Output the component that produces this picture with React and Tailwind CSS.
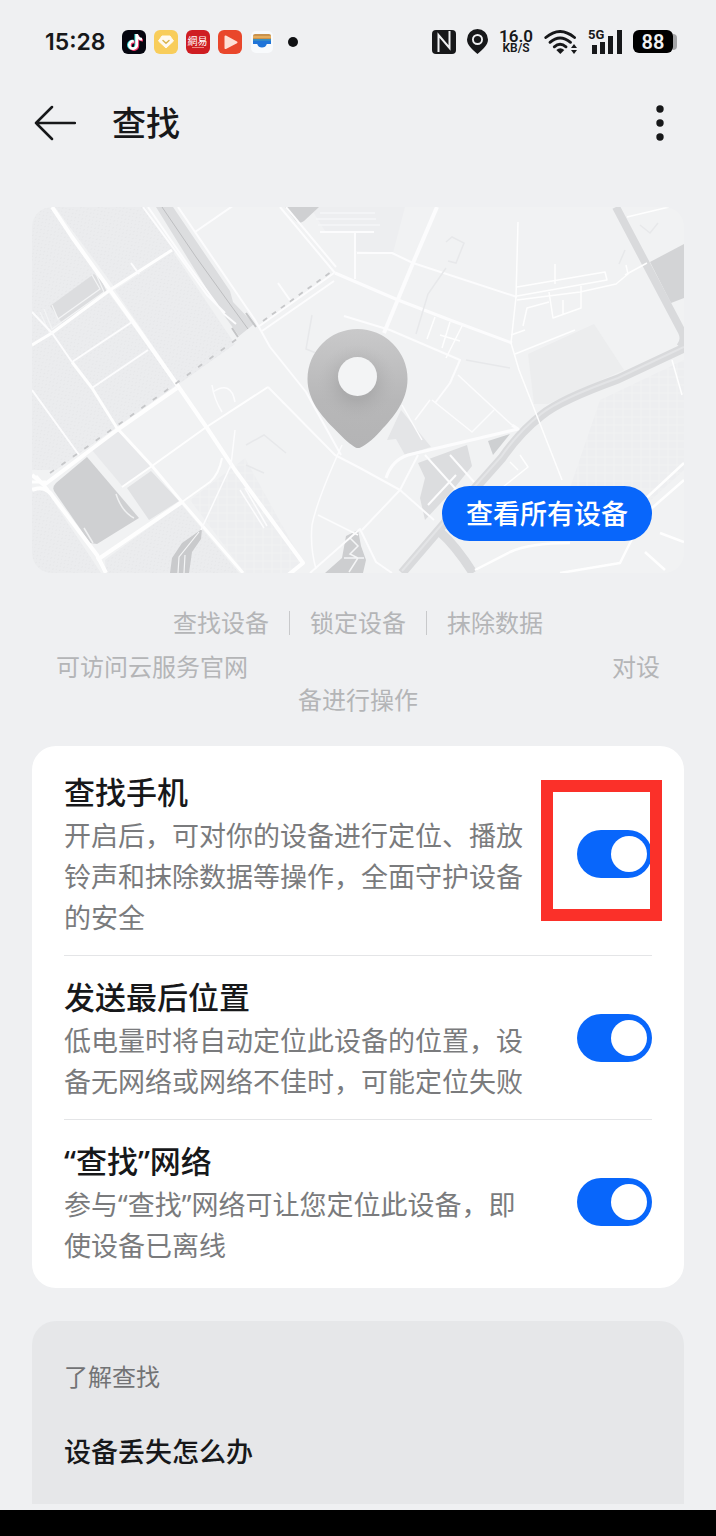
import React from "react";
import { FaTiktok } from "react-icons/fa6";

function StatusBar() {
  return (
    <div className="flex h-[83px] items-center justify-between pl-[45px] pr-[39px] font-['Inter','Noto_Sans_CJK_SC',sans-serif] text-[#17181a]">
      <div className="flex items-center gap-2">
        <span className="mr-2 text-[23px] font-semibold leading-6">15:28</span>
        <span className="relative grid size-6 place-items-center rounded-[6px] bg-[#050610]">
          <FaTiktok className="absolute left-[4px] top-[4px] size-4 text-[#35dbe0]" />
          <FaTiktok className="absolute left-[6px] top-[5px] size-4 text-[#f0386b]" />
          <FaTiktok className="absolute left-[5px] top-[4px] size-4 text-white" />
        </span>
        <svg className="size-6" viewBox="0 0 24 24">
          <rect width="24" height="24" rx="6" fill="#f8cd5b" />
          <path d="M8 6h8l3.500 5-7.500 7-7.500-7z" fill="#fffaf0" stroke="#fffaf0" strokeLinejoin="round" />
          <path d="M9 10.500l3 2.700 3-2.700" fill="none" stroke="#d9b44c" strokeWidth="1.500" strokeLinecap="round" />
        </svg>
        <span className="flex size-6 flex-col items-center justify-center rounded-[6px] bg-[#cf1d22] text-[10px] font-normal leading-[12px] text-white">
          網易
          <span className="h-px w-3 bg-[#ec8c86]" />
        </span>
        <svg className="size-6" viewBox="0 0 24 24">
          <rect width="24" height="24" rx="6" fill="#e9472b" />
          <path d="M7.500 6.500l11 5.800-11 5.700z" fill="#fde0d6" stroke="#fde0d6" strokeWidth="2" strokeLinejoin="round" />
        </svg>
        <svg className="size-6" viewBox="0 0 24 24">
          <rect x="1" y="1" width="22" height="22" rx="5" fill="#f8fafc" />
          <path d="M3 6a2 2 0 012-2h14a2 2 0 012 2v3H3z" fill="#c9924d" />
          <path d="M3 6h18v2H3z" fill="#e5ad5d" />
          <path d="M3 9h18v5h-4.200c-.7 2.500-2.400 3.500-4.800 3.500s-4.100-1-4.800-3.500H3z" fill="#1f74d8" />
          <path d="M3 9h18v1.800H3z" fill="#3a8fc0" />
        </svg>
        <span className="ml-[6px] size-[10px] rounded-full bg-[#101113]" />
      </div>

      <div className="flex items-center gap-[11px]">
        <svg className="h-6 w-6" viewBox="0 0 24 24">
          <rect width="24" height="24" rx="4" fill="#17181a" />
          <path d="M6.500 22V5L17.500 18V1" fill="none" stroke="#eff0f2" strokeWidth="2" />
        </svg>
        <svg className="h-[25px] w-[21px]" viewBox="0 0 21 25">
          <path fillRule="evenodd" d="M10.500 0a10.500 10.500 0 0110.500 10.500c0 5.500-5 9.500-10.500 14.500C5 20 0 16 0 10.500A10.500 10.500 0 0110.500 0zm0 5a5.500 5.500 0 100 11 5.500 5.500 0 000-11z" fill="#17181a" />
          <circle cx="10.500" cy="10.500" r="3.600" fill="#17181a" />
        </svg>
        <span className="flex flex-col items-center font-['Roboto',sans-serif] font-semibold">
          <span className="text-[17px] leading-[14px]">16.0</span>
          <span className="text-[12px] leading-[11px]">KB/S</span>
        </span>
        <svg className="h-6 w-[33px]" viewBox="0 0 33 24">
          <g fill="none" stroke="#17181a" strokeWidth="2.900" strokeLinecap="round">
            <path d="M1.800 7.500Q16 -4.500 30.500 7.500" />
            <path d="M6 12.300Q16 3.500 26.500 12.300" />
            <path d="M10.300 16.800Q16 11.800 22 16.800" />
          </g>
          <path d="M12.300 20q4-3.600 8 0l-4 4z" fill="#17181a" />
          <path d="M30 14l3 4h-6zM30 24l3-4h-6z" fill="#17181a" />
        </svg>
        <span className="relative">
          <svg className="h-6 w-[34px]" viewBox="0 0 34 24">
            <path d="M4 15h5v9H4zM12 12h5v12h-5zM20 6h5v18h-5zM29 0h5v24h-5z" fill="#17181a" />
          </svg>
          <span className="absolute left-0 top-0 font-['Roboto',sans-serif] text-[13px] font-bold leading-[10px]">5G</span>
        </span>
        <span className="flex items-center">
          <span className="grid h-[23px] w-10 place-items-center rounded-[6px] bg-black font-['Roboto',sans-serif] text-[20px] font-semibold leading-5 text-[#eff0f2]">88</span>
          <span className="h-4 w-1 rounded-r-[4px] bg-[#a4a5a7]" />
        </span>
      </div>
    </div>
  );
}

function Header() {
  return (
    <header className="flex h-20 items-center pl-[34px] pr-11">
      <button type="button" aria-label="返回">
        <svg className="h-9 w-[42px]" viewBox="0 0 42 36" fill="none" stroke="#17181a" strokeWidth="2.500" strokeLinecap="round" strokeLinejoin="round">
          <path d="M18 2L2 18l16 16M2 18h39" />
        </svg>
      </button>
      <h1 className="ml-9 flex-1 text-[34px] font-medium leading-10">查找</h1>
      <button type="button" aria-label="更多" className="px-2">
        <svg className="h-9 w-2" viewBox="0 0 8 36" fill="#17181a">
          <circle cx="4" cy="4" r="3.700" />
          <circle cx="4" cy="18" r="3.700" />
          <circle cx="4" cy="32" r="3.700" />
        </svg>
      </button>
    </header>
  );
}

function MapArt() {
  return (
    <svg className="block w-full" viewBox="32 207 652 366" aria-hidden="true">
      <defs>
        <linearGradient id="pin" x1="0" y1="0" x2="0" y2="1">
          <stop offset="0" stopColor="#c9c9ca" />
          <stop offset="0.600" stopColor="#b7b7b8" />
          <stop offset="1" stopColor="#b4b4b5" />
        </linearGradient>
        <radialGradient id="pinShade" gradientUnits="userSpaceOnUse" cx="357" cy="384" r="40">
          <stop offset="0.400" stopColor="#a6a6a7" stopOpacity="0.700" />
          <stop offset="1" stopColor="#b8b8b9" stopOpacity="0" />
        </radialGradient>
        <pattern id="blocks" width="5" height="5" patternUnits="userSpaceOnUse" patternTransform="rotate(-35)">
          <rect width="5" height="5" fill="#ebecee" />
          <path d="M1 1h2v1H1zM4 3h1v1H4z" fill="#e6e7e9" />
        </pattern>
        <pattern id="grid" width="9" height="8" patternUnits="userSpaceOnUse">
          <rect width="9" height="8" fill="#edeef0" />
          <path d="M0 1h9M2 0v8" stroke="#f1f2f3" strokeWidth="1" />
        </pattern>
      </defs>
      <rect x="32" y="207" width="652" height="366" fill="#f1f2f3" />

      <g fill="url(#blocks)">
        <path d="M32 207h20l58 83-78 55z" />
        <path d="M55 207h90l30 45-60 36z" />
        <path d="M115 290l58-38 62 92-56 40z" />
        <path d="M32 347l76-55 68 93-120 85H32z" />
        <path d="M32 490l14 0 55 83H32z" />
        <path d="M105 560l76-56 58 69H106z" />
      </g>
      <path d="M190 500l55-42 58 105-16 10h-42z" fill="url(#grid)" />
      <path d="M528 354l66-30 30 46-76 34-14 0z" fill="#ecedee" />
      <path d="M600 400l84-40v110l-55 50h-70z" fill="url(#grid)" />
      <path d="M310 207h95l-12 46-38-2v-20h-30z" fill="#edeef0" />
      <g fill="none" stroke="#f5f6f7" strokeWidth="1.500">
        <path d="M320 213h55M316 219h60M318 225h62" />
      </g>

      <path d="M50 306l44-32 16 14-48 35z" fill="#dcdddf" />
      <path d="M44 309l8 20 52-37-8-18M52 305l6 14 42-30-8-14M40 312l10 22 58-41-10-22" fill="none" stroke="#f3f4f5" strokeWidth="1.200" />
      <path d="M156 207h17l57 84 3 11 21 22-15 12-21-29z" fill="#dcdddf" />
      <path d="M162 207l34 50 36 50 16 22" fill="none" stroke="#bdbec0" strokeWidth="1" />
      <path d="M232 328l6 9M246 313l10 14" stroke="#c4c5c7" strokeWidth="2" />
      <path d="M285 207h34l-15 14q-5 4-9-1z" fill="#cfd0d2" />
      <path d="M650 262l34-18v54l-13 5z" fill="#d3d4d6" />
      <path d="M87 457l52 61-42 26-7-1-36-52q-2-4 2-8z" fill="#cfd0d2" />
      <path d="M116 494q6 18 18 24M84 528l9 15" fill="none" stroke="#eff0f1" strokeWidth="1.500" />
      <path d="M92 450l25-20 34 36-28 21z" fill="#e8e9eb" />
      <path d="M127 488l24-17 28 30-30 19z" fill="#e0e1e3" />
      <path d="M170 573l2-15 10-15 20-14-1 10-9 13-3 21z" fill="#c9cacc" />
      <path d="M178 573l1-16 20-25M184 573l1-18" fill="none" stroke="#f4f5f6" strokeWidth="1.200" />
      <path d="M325 573l17-15 4-22 12-6 3 16 5 14-3 13z" fill="#cdced0" />
      <path d="M350 538l8 8-8 8 8 4-9 14M344 558h20" fill="none" stroke="#f4f5f6" strokeWidth="1.500" />
      <path d="M387 440l14-30 30 37-26 8-9-16z" fill="#e4e5e7" />
      <path d="M418 463l49-18 5 21-20 25-27 29-5-22 5-20z" fill="#dcdddf" />
      <path d="M488 441l22-7-17 21z" fill="#ced0d2" />

      <g fill="none" stroke="#d9dadc" strokeLinejoin="round">
        <path d="M616 207l66 125q4 8-2 15" strokeWidth="8" />
        <path d="M684 348L618 379Q560 400 542 415Q520 432 502 458L462 503L402 573" strokeWidth="9" />
        <path d="M440 532q16 14 33 41" strokeWidth="9" />
      </g>
      <path d="M684 347L618 378Q560 399 541 414Q519 431 501 457L461 502L402 571" fill="none" stroke="#e3e4e6" strokeWidth="2" />

      <g fill="none" stroke="#fefefe" strokeWidth="4" strokeLinejoin="round">
        <path d="M52 207l20 30 38 53 26 36 42 60 29 42 28 42 68 93-16 13" />
        <path d="M32 345l20-12 58-43 62-40" strokeWidth="3" />
        <path d="M32 475l12 10 73-55 60-42" />
        <path d="M32 490q14-6 22 8l43 57 9 18" />
        <path d="M36 476l12 14M32 482h14" strokeWidth="3" />
        <path d="M72 362l20 26 25 40 35 38 30 36 61 71" strokeWidth="3" />
        <path d="M97 560l85-58" />
        <path d="M182 502l28-20q9-8 12-24" strokeWidth="2" />
        <path d="M122 487l30-21 53-38 63-41" strokeWidth="2" />
      </g>
      <g fill="none" stroke="#fcfcfd" strokeWidth="2" strokeLinejoin="round">
        <path d="M32 312l20 21 20 29M32 390l47 65M72 362l60-40M92 388l56-38M131 263l8 11" />
        <path d="M148 207l38 55 38 52 12 10M143 207l34 46 30 42 18 18M178 207l77 113 15 27 36 45 35 63" />
        <path d="M195 232l42-29M280 207l55 66M286 207l50 60M258 327l76-54M262 331l72-50M278 283l14 20" />
        <path d="M335 273l63 27 52 20 62 23" strokeWidth="3" />
        <path d="M437 207l-24 56-29 70" strokeWidth="4" />
        <path d="M355 232v47M320 232h54M357 253h35l21 10 104 34" />
        <path d="M344 316l46 14 70 30-10 23-15 20M268 387l67 68 25 13 40 22 34 30" />
        <path d="M212 385q2 14 10 27M213 392q18-12 22 10M235 430l-4 35-30 65M342 445q-25 55-30 80-2 23 4 44" strokeWidth="1.500" />
        <path d="M310 573l50-44 16 33 16 11" />
        <path d="M245 488l22 38M240 490l24 38M318 515l40 20" strokeWidth="1.500" />
        <path d="M400 490l-38 40M400 490l18-35" />
        <path d="M386 478q6-18 22-23l110-26-6-4" strokeWidth="3" />
        <path d="M430 400l-15 20M432 400l40 32 22-22M458 375l54 50M402 405l20 35" strokeWidth="1.500" />
        <path d="M425 455l45 50M450 455l24 27M456 475l-28 30" strokeWidth="2" />
      </g>
      <g fill="none" stroke="#fefefe" strokeWidth="2" strokeLinejoin="round">
        <path d="M518 222l-2 75-5 46 8 27 43 110" strokeWidth="1.500" />
        <path d="M517 287l88-15 2 8-90 16M517 300l63-8 36-8 12-10-2-9M555 264v20M549 292l4 26 28-10v-22M563 300v14" strokeWidth="1.500" />
        <path d="M511 335l14-5M523 326l4-18 22-6M515 354l60-24M627 217l42-10M625 275l22-12" strokeWidth="1.500" />
        <path d="M435 317l-8 22M450 322l-8 26M462 326l-16 32M440 335l20 6" strokeWidth="1.500" />
        <path d="M475 570l35-18q20-9 60-9M684 463l-56 52M684 480l-40 35-24 48-60 10M660 533l24 9M645 552l20 18" strokeWidth="2.500" />
        <path d="M672 360l10 35M520 455l8 12-30 24M510 462l8 8" strokeWidth="1.500" />
      </g>
      <g fill="none" stroke="#e7e8ea" strokeWidth="1.500">
        <path d="M446 242l6-5 12 6-8 20-8-2M416 334l12-40 18-26M246 445l18-10 22 18M246 465l18 8M625 250l-6 14M510 368l-44-8" />
        <path d="M312 315l-6 34 20 8M640 225l10 8 8-10" />
      </g>
      <g fill="none" stroke="#c6c7c9" strokeWidth="1.800">
        <path d="M50 473l68-48 53-38 70-51" strokeDasharray="5 9" />
        <path d="M263 321l68-49" strokeDasharray="5 6" />
      </g>

      <path id="pinBody" d="M357.500 329a50 50 0 0150 50c0 22-14 38-27 52-9 10-15 14-20 16.500q-2.500 1.200-5 0c-5-3-11-8-20-17.500-14-14-28-30-28-51a50 50 0 0150-50z" fill="url(#pin)" />
      <circle cx="357" cy="384" r="40" fill="url(#pinShade)" />
      <circle cx="357.500" cy="376.500" r="19.500" fill="#f3f4f5" />
    </svg>
  );
}

const settings = [
  {
    id: "find-phone",
    title: "查找手机",
    text: "开启后，可对你的设备进行定位、播放铃声和抹除数据等操作，全面守护设备的安全",
    marked: true,
  },
  {
    id: "last-location",
    title: "发送最后位置",
    text: "低电量时将自动定位此设备的位置，设备无网络或网络不佳时，可能定位失败",
  },
  {
    id: "find-network",
    title: "“查找”网络",
    text: "参与“查找”网络可让您定位此设备，即使设备已离线",
  },
];

function SettingRow({ id, title, text, marked }) {
  return (
    <div className="flex items-center gap-12 border-t border-[#e4e5e7] pb-[17px] pt-[18px] first:border-t-0">
      <label htmlFor={id} className="min-w-0 flex-1">
        <span className="block text-[31px] font-medium leading-[46px]">{title}</span>
        <span className="block text-[27px] leading-[41px] text-[#7a7b7d]">{text}</span>
      </label>
      <div className="relative flex shrink-0">
        <input
          id={id}
          type="checkbox"
          role="switch"
          defaultChecked
          className="relative h-12 w-[75px] appearance-none rounded-full bg-[#c4c6ca] before:absolute before:left-[5px] before:top-[6px] before:size-9 before:rounded-full before:bg-white checked:bg-[#0866fb] checked:before:left-[34px]"
        />
        {marked && (
          <span className="pointer-events-none absolute -left-9 -top-[50px] h-[141px] w-[121px] border-[12px] border-[#fb3029]" />
        )}
      </div>
    </div>
  );
}

export default function App() {
  return (
    <div className="flex min-h-screen flex-col bg-[#eff0f2] font-['Noto_Sans','Noto_Sans_CJK_SC',sans-serif] text-[#17181a]">
      <StatusBar />
      <Header />
      <main className="flex flex-1 flex-col px-8 pb-[6px] pt-11">
        <section className="relative overflow-hidden rounded-[20px]">
          <MapArt />
          <button type="button" className="absolute bottom-8 right-8 h-[55px] rounded-full bg-[#0866fb] px-6 text-[27px] font-medium leading-10 text-white">
            查看所有设备
          </button>
        </section>

        <div className="mt-[33px] flex items-center justify-center text-[24px] leading-[34px] text-[#b4b5b7]">
          <span>查找设备</span>
          <span className="mx-5 h-6 w-px bg-[#c8c9cb]" />
          <span>锁定设备</span>
          <span className="mx-5 h-6 w-px bg-[#c8c9cb]" />
          <span>抹除数据</span>
        </div>
        <div className="mt-[10px] px-6 text-center text-[24px] leading-[33px] text-[#b4b5b7]">
          <p className="flex justify-between">
            <span>可访问云服务官网</span>
            <span>对设</span>
          </p>
          <p>备进行操作</p>
        </div>

        <section className="mt-[30px] rounded-[24px] bg-white px-8 py-[5px]">
          {settings.map((item) => (
            <SettingRow key={item.id} {...item} />
          ))}
        </section>

        <section className="mt-[33px] flex-1 rounded-t-[24px] bg-[#e6e7e9] px-8 pb-6 pt-9">
          <h2 className="text-[24px] leading-10 text-[#727375]">了解查找</h2>
          <a href="#lost" className="mt-[34px] block text-[27px] font-medium leading-[42px]">
            设备丢失怎么办
          </a>
        </section>
      </main>
      <div className="h-[26px] bg-black" />
    </div>
  );
}
